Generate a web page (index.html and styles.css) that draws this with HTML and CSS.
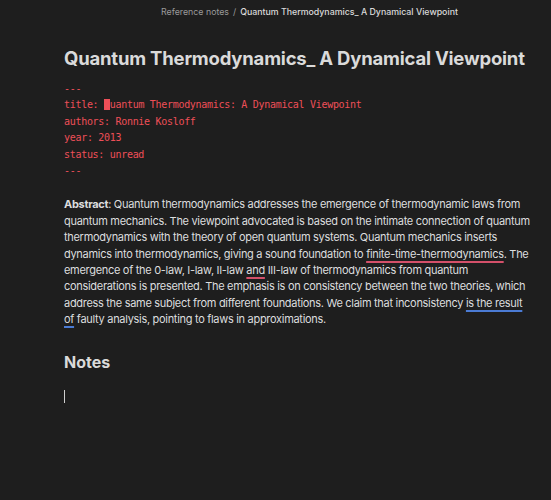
FILE: index.html
```html
<!DOCTYPE html>
<html>
<head>
<meta charset="utf-8">
<link rel="stylesheet" href="styles.css">
</head>
<body>
<div class="view">
  <header class="crumbs">
    <span class="crumb-parent">Reference notes</span>
    <span class="crumb-sep">/</span>
    <span class="crumb-title">Quantum Thermodynamics_ A Dynamical Viewpoint</span>
  </header>
  <main class="doc">
    <h1 class="doc-title">Quantum Thermodynamics_ A Dynamical Viewpoint</h1>
    <div class="frontmatter">
      <div class="fm-line">---</div>
      <div class="fm-line">title: <span class="caret-block">Q</span>uantum Thermodynamics: A Dynamical Viewpoint</div>
      <div class="fm-line">authors: Ronnie Kosloff</div>
      <div class="fm-line">year: 2013</div>
      <div class="fm-line">status: unread</div>
      <div class="fm-line">---</div>
    </div>
    <p class="abstract"><strong>Abstract</strong>: Quantum thermodynamics addresses the emergence of thermodynamic laws from quantum mechanics. The viewpoint advocated is based on the intimate connection of quantum thermodynamics with the theory of open quantum systems. Quantum mechanics inserts dynamics into thermodynamics, giving a sound foundation to <span class="spell">finite-time-thermodynamics</span>. The emergence of the 0-law, I-law, II-law <span class="spell">and</span> III-law of thermodynamics from quantum considerations is presented. The emphasis is on consistency between the two theories, which address the same subject from different foundations. We claim that inconsistency <span class="grammar">is the result of</span> faulty analysis, pointing to flaws in approximations.</p>
    <h2 class="section">Notes</h2>
    <div class="edit-line"><span class="text-caret"></span></div>
  </main>
</div>
</body>
</html>
```

FILE: styles.css
```css
html, body {
  margin: 0;
  padding: 0;
  background: #1e1e1e;
}
body {
  font-family: Inter, "Noto Sans", sans-serif;
  color: #dcddde;
  width: 551px;
  height: 500px;
  overflow: hidden;
}
.crumbs {
  display: flex;
  justify-content: center;
  align-items: center;
  gap: 4px;
  height: 22px;
  font-size: 8.8px;
  padding-left: 68px;
}
.crumb-parent, .crumb-sep {
  color: #9a9a9a;
}
.crumb-title {
  color: #dadada;
  font-weight: 500;
}
.doc {
  padding: 24px 0 0 64px;
  width: 470px;
}
.doc-title {
  margin: 0;
  font-size: 18.5px;
  font-weight: 700;
  line-height: 24px;
  color: #dadada;
  letter-spacing: -0.2px;
  white-space: nowrap;
}
.frontmatter {
  margin-top: 11px;
  font-family: "DejaVu Sans Mono", monospace;
  font-size: 10px;
  letter-spacing: -0.3px;
  line-height: 16.4px;
  color: #ee4f58;
}
.caret-block {
  background: #ee4f58;
  color: #ee4f58;
}
.abstract {
  margin: 17px 0 0;
  font-size: 11px;
  letter-spacing: -0.3px;
  line-height: 16.4px;
  color: #dcddde;
}
.abstract strong {
  font-weight: 700;
}
.spell {
  text-decoration: underline;
  text-decoration-color: #d4506a;
  text-decoration-thickness: 2px;
  text-underline-offset: 3px;
}
.grammar {
  text-decoration: underline;
  text-decoration-color: #4b7bd4;
  text-decoration-thickness: 2px;
  text-underline-offset: 3px;
}
.section {
  margin: 22px 0 0;
  font-size: 16px;
  font-weight: 700;
  line-height: 24px;
  color: #dadada;
}
.edit-line {
  margin-top: 15px;
  height: 16px;
  display: flex;
  align-items: center;
}
.text-caret {
  display: block;
  width: 1px;
  height: 13px;
  background: #cfcfcf;
}
```
